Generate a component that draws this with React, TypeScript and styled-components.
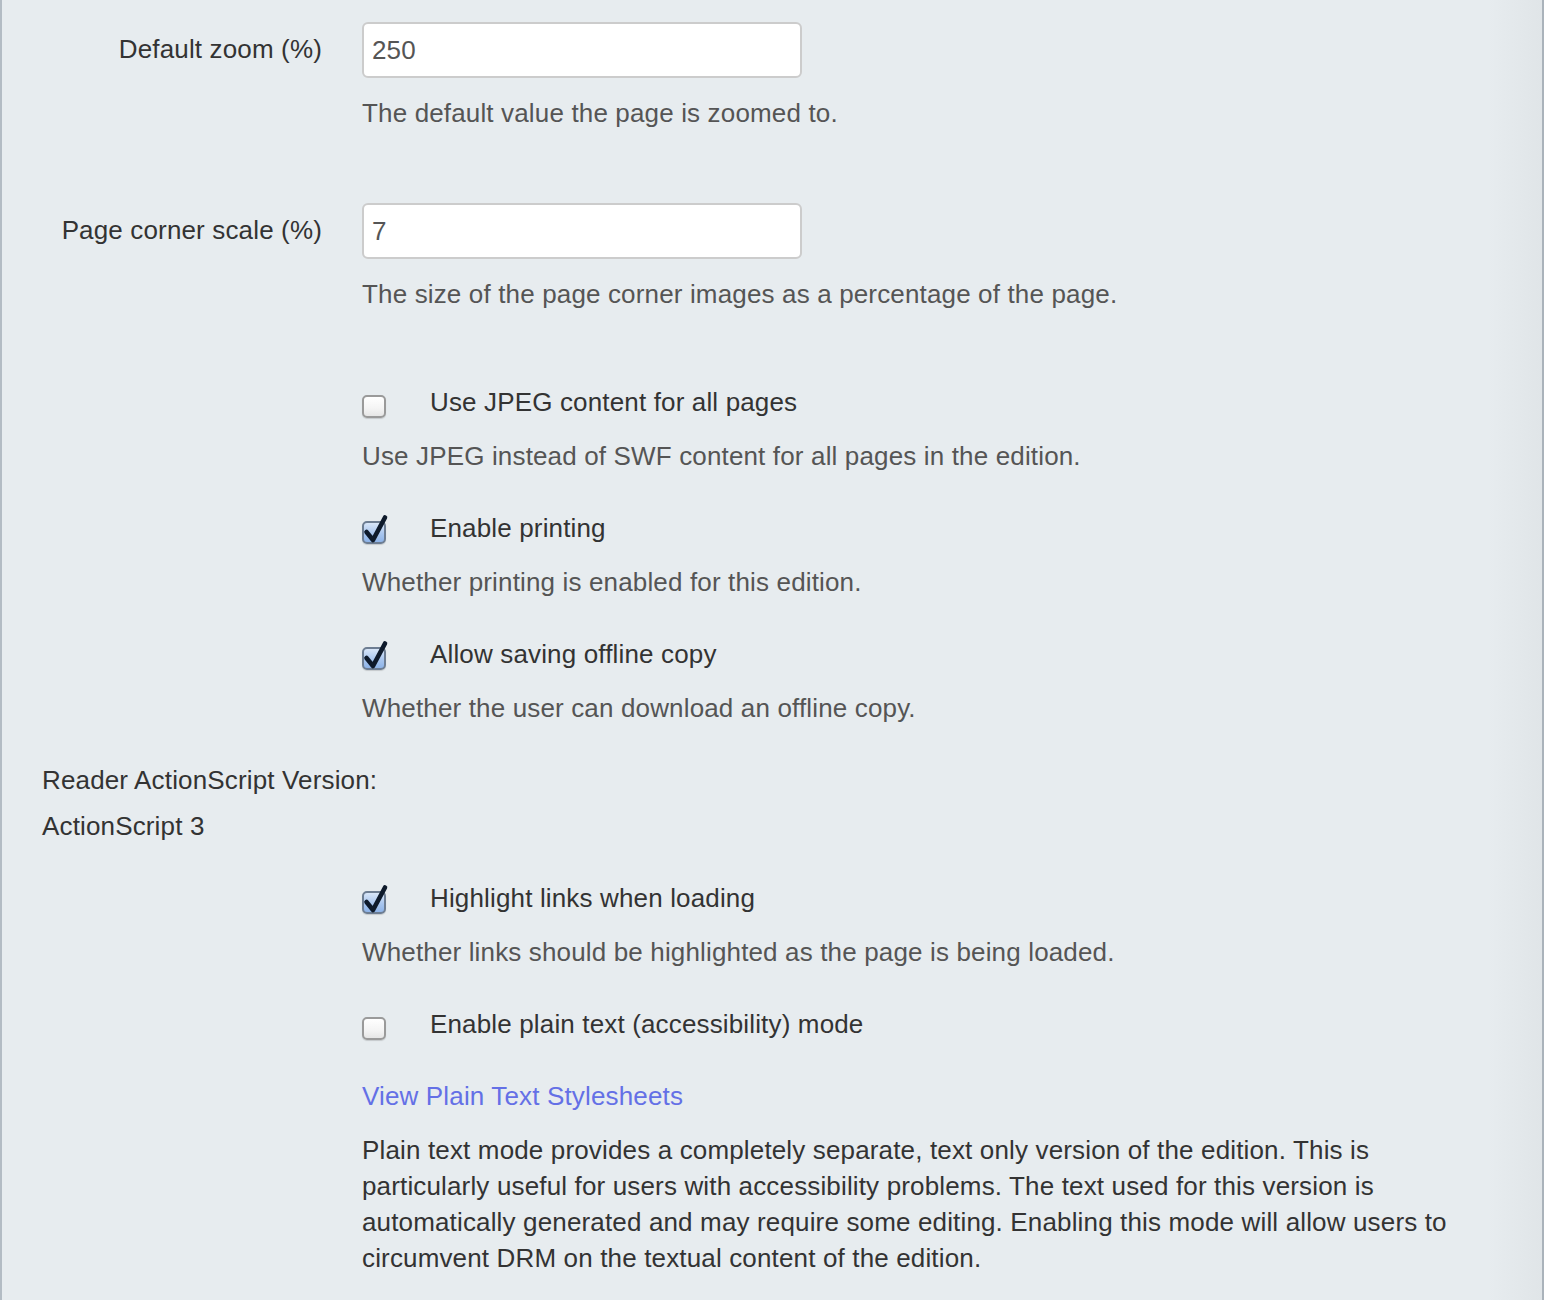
import React from 'react';
import styled, { createGlobalStyle } from 'styled-components';

const GlobalStyle = createGlobalStyle`
  html, body {
    margin: 0;
    padding: 0;
    background: #e7ecef;
  }
  body {
    font-family: "Liberation Sans", Arial, Helvetica, sans-serif;
    font-size: 26px;
    line-height: 36px;
    letter-spacing: 0.15px;
    color: #333333;
  }
`;

type Field = { label: string; value: string; help: string };
type Check = { label: string; help?: string; checked: boolean };

const fields: Field[] = [
  { label: 'Default zoom (%)', value: '250', help: 'The default value the page is zoomed to.' },
  { label: 'Page corner scale (%)', value: '7', help: 'The size of the page corner images as a percentage of the page.' },
];

const topChecks: Check[] = [
  { label: 'Use JPEG content for all pages', help: 'Use JPEG instead of SWF content for all pages in the edition.', checked: false },
  { label: 'Enable printing', help: 'Whether printing is enabled for this edition.', checked: true },
  { label: 'Allow saving offline copy', help: 'Whether the user can download an offline copy.', checked: true },
];

function CheckBox({ checked }: { checked: boolean }) {
  return (
    <Box $checked={checked}>
      {checked && (
        <CheckMark viewBox="0 0 24 24" width="24" height="24">
          <path d="M3.5 12 L10 20 L22 -2.5" fill="none" stroke="#0e1a2b" strokeWidth="4.6" strokeLinecap="round" strokeLinejoin="round" />
        </CheckMark>
      )}
    </Box>
  );
}

function CheckGroup({ item }: { item: Check }) {
  return (
    <Controls>
      <CheckRow>
        <CheckBox checked={item.checked} />
        <span>{item.label}</span>
      </CheckRow>
      {item.help && <Help>{item.help}</Help>}
    </Controls>
  );
}

export default function App() {
  return (
    <>
      <GlobalStyle />
      <Page>
        {fields.map((f) => (
          <FieldGroup key={f.label}>
            <Label>{f.label}</Label>
            <div>
              <TextInput defaultValue={f.value} />
              <FieldHelp>{f.help}</FieldHelp>
            </div>
          </FieldGroup>
        ))}

        {topChecks.map((c) => (
          <CheckGroup key={c.label} item={c} />
        ))}

        <StaticGroup>
          <div>Reader ActionScript Version:</div>
          <StaticValue>ActionScript 3</StaticValue>
        </StaticGroup>

        <CheckGroup
          item={{
            label: 'Highlight links when loading',
            help: 'Whether links should be highlighted as the page is being loaded.',
            checked: true,
          }}
        />

        <Controls>
          <CheckRow>
            <CheckBox checked={false} />
            <span>Enable plain text (accessibility) mode</span>
          </CheckRow>
          <LinkLine href="#">View Plain Text Stylesheets</LinkLine>
          <Paragraph>
            Plain text mode provides a completely separate, text only version of the edition. This is
            particularly useful for users with accessibility problems. The text used for this version is
            automatically generated and may require some editing. Enabling this mode will allow users to
            circumvent DRM on the textual content of the edition.
          </Paragraph>
        </Controls>
      </Page>
    </>
  );
}

const Page = styled.main`
  box-sizing: border-box;
  min-height: 1300px;
  padding: 22px 0 0 40px;
  border-left: 2px solid #b3bcc4;
  border-right: 2px solid #aab3bb;
  background: linear-gradient(
    to right,
    #e7ecef 0%,
    #e7ecef 96.5%,
    #e0e5e8 100%
  );
`;

const FieldGroup = styled.div`
  display: grid;
  grid-template-columns: 280px 1fr;
  column-gap: 40px;
  margin-bottom: 72px;
`;

const Label = styled.label`
  text-align: right;
  padding-top: 9px;
  color: #333333;
`;

const TextInput = styled.input`
  box-sizing: border-box;
  display: block;
  width: 440px;
  height: 56px;
  padding: 0 8px;
  border: 2px solid #cccccc;
  border-radius: 6px;
  background: #ffffff;
  font-family: inherit;
  font-size: 26px;
  letter-spacing: 0.15px;
  color: #555555;
  outline: none;
`;

const Help = styled.p`
  margin: 18px 0 0;
  color: #555555;
`;

const FieldHelp = styled(Help)`
  margin-top: 17px;
`;

const Controls = styled.div`
  margin: 0 0 36px 320px;
`;

const CheckRow = styled.div`
  display: flex;
  align-items: center;
  gap: 44px;
  color: #333333;
`;

const Box = styled.span<{ $checked: boolean }>`
  position: relative;
  box-sizing: border-box;
  flex: none;
  width: 24px;
  height: 23px;
  margin-top: 8px;
  border-radius: 5px;
  border: 2px solid ${(p) => (p.$checked ? '#6d7d92' : '#9a9a9a')};
  background: ${(p) =>
    p.$checked
      ? 'linear-gradient(to bottom, #d8e6f8 0%, #a9c6ee 55%, #8db3e8 100%)'
      : 'linear-gradient(to bottom, #ffffff 0%, #f4f4f4 60%, #e6e6e6 100%)'};
  box-shadow: 0 1px 1px rgba(0, 0, 0, 0.15);
`;

const CheckMark = styled.svg`
  position: absolute;
  left: -1px;
  top: -3px;
  overflow: visible;
`;

const StaticGroup = styled.div`
  margin-bottom: 36px;
  color: #333333;
`;

const StaticValue = styled.div`
  margin-top: 10px;
`;

const LinkLine = styled.a`
  display: block;
  margin-top: 36px;
  color: #6470e6;
  text-decoration: none;
`;

const Paragraph = styled.p`
  margin: 18px 0 0;
  max-width: 1110px;
  color: #333333;
`;
